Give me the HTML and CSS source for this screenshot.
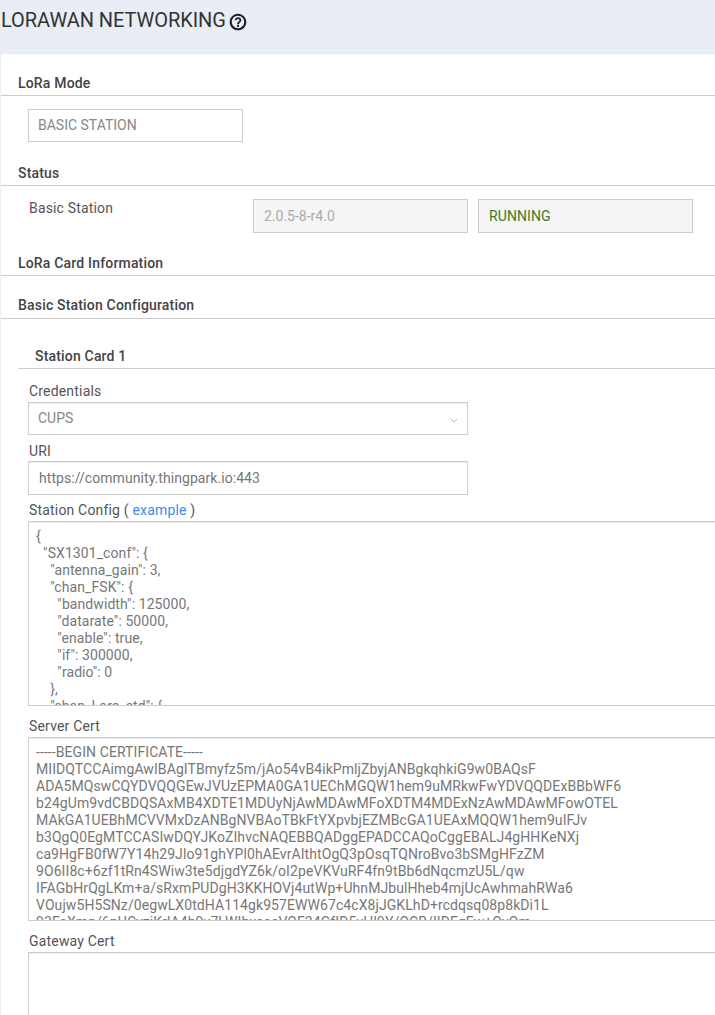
FILE: index.html
```html
<!DOCTYPE html>
<html lang="en">
<head>
<meta charset="utf-8">
<title>LoRaWAN Networking</title>
<link rel="stylesheet" href="styles.css">
</head>
<body>
<div class="page">
  <header class="page-header">
    <h1 class="page-title">LORAWAN NETWORKING</h1>
    <svg class="help-icon" viewBox="0 0 24 24" width="20" height="20" aria-hidden="true"><path d="M12 2C6.480 2 2 6.480 2 12s4.480 10 10 10 10-4.480 10-10S17.520 2 12 2zm0 17.400c-4.080 0-7.400-3.320-7.400-7.400S7.920 4.600 12 4.600s7.400 3.320 7.400 7.400-3.320 7.400-7.400 7.400z"/><path d="M10.900 15.700h2.300v2.200h-2.300zM12 6.200c-2.200 0-3.900 1.600-3.900 3.800h2.200c0-1 .7-1.700 1.700-1.700s1.700.7 1.700 1.600c0 1.800-2.800 1.700-2.800 4.900h2.300c0-2.200 2.800-2.500 2.800-4.900 0-2.200-1.800-3.700-4-3.700z"/></svg>
  </header>
  <main class="panel">
    <h2 class="section section-first">LoRa Mode</h2>
    <div class="mode-row"><div class="box mode-box">BASIC STATION</div></div>

    <h2 class="section section-status">Status</h2>
    <div class="status-row">
      <span class="status-label">Basic Station</span>
      <div class="box box-disabled status-box">2.0.5-8-r4.0</div>
      <div class="box box-disabled status-box status-running">RUNNING</div>
    </div>

    <h2 class="section section-info">LoRa Card Information</h2>
    <h2 class="section section-config">Basic Station Configuration</h2>

    <h3 class="card-title">Station Card 1</h3>
    <div class="card-body">
      <label class="field-label">Credentials</label>
      <div class="box select-box">CUPS
        <svg class="chevron" viewBox="0 0 10 6" width="8" height="5" aria-hidden="true"><path d="M1 1l4 4 4-4" fill="none" stroke="#a8a8a8" stroke-width="1"/></svg>
      </div>
      <label class="field-label label-uri">URI</label>
      <div class="box uri-box">https://community.thingpark.io:443</div>
      <label class="field-label label-config">Station Config ( <a class="link" href="#">example</a> )</label>
      <textarea class="area area-config" readonly>{
  "SX1301_conf": {
    "antenna_gain": 3,
    "chan_FSK": {
      "bandwidth": 125000,
      "datarate": 50000,
      "enable": true,
      "if": 300000,
      "radio": 0
    },
    "chan_Lora_std": {
      "bandwidth": 250000,
    }
  }
}</textarea>
      <label class="field-label label-cert">Server Cert</label>
      <textarea class="area area-cert" readonly>-----BEGIN CERTIFICATE-----
MIIDQTCCAimgAwIBAgITBmyfz5m/jAo54vB4ikPmljZbyjANBgkqhkiG9w0BAQsF
ADA5MQswCQYDVQQGEwJVUzEPMA0GA1UEChMGQW1hem9uMRkwFwYDVQQDExBBbWF6
b24gUm9vdCBDQSAxMB4XDTE1MDUyNjAwMDAwMFoXDTM4MDExNzAwMDAwMFowOTEL
MAkGA1UEBhMCVVMxDzANBgNVBAoTBkFtYXpvbjEZMBcGA1UEAxMQQW1hem9uIFJv
b3QgQ0EgMTCCASIwDQYJKoZIhvcNAQEBBQADggEPADCCAQoCggEBALJ4gHHKeNXj
ca9HgFB0fW7Y14h29Jlo91ghYPl0hAEvrAIthtOgQ3pOsqTQNroBvo3bSMgHFzZM
9O6II8c+6zf1tRn4SWiw3te5djgdYZ6k/oI2peVKVuRF4fn9tBb6dNqcmzU5L/qw
IFAGbHrQgLKm+a/sRxmPUDgH3KKHOVj4utWp+UhnMJbulHheb4mjUcAwhmahRWa6
VOujw5H5SNz/0egwLX0tdHA114gk957EWW67c4cX8jJGKLhD+rcdqsq08p8kDi1L
93FcXmn/6pUCyziKrlA4b9v7LWIbxcceVOF34GfID5yHI9Y/QCB/IIDEgEw+OyQm
jgSubJrIqg0CAwEAAaNCMEAwDwYDVR0TAQH/BAUwAwEB/zAOBgNVHQ8BAf8EBAMC
-----END CERTIFICATE-----</textarea>
      <label class="field-label label-gateway">Gateway Cert</label>
      <textarea class="area area-gateway" readonly></textarea>
    </div>
  </main>
</div>
</body>
</html>
```
FILE: styles.css
```css
* { box-sizing: border-box; }
html, body { margin: 0; padding: 0; }
body {
  background: #fff;
  font-family: Roboto, "Liberation Sans", sans-serif;
  font-size: 14px;
  color: #555;
}
.page {
  width: 715px;
  height: 1015px;
  overflow: hidden;
  background: #e9edf6;
}
.page-header {
  height: 54px;
  display: flex;
  align-items: flex-start;
  padding: 7px 0 0 1px;
  background: #e9edf6;
  border-bottom: 1px solid #e4e8f1;
}
.page-title {
  margin: 0;
  font-size: 20px;
  line-height: 26px;
  font-weight: 400;
  letter-spacing: -0.05px;
  color: #333;
}
.help-icon { margin: 5px 0 0 2px; fill: #222; flex: none; }
.panel {
  margin-left: 1px;
  background: #fff;
  height: 961px;
}
.section {
  margin: 0;
  padding-left: 17px;
  font-size: 14px;
  line-height: 20px;
  font-weight: 500;
  letter-spacing: 0.18px;
  color: #444;
  border-bottom: 1px solid #ccc;
}
.section-first { padding-top: 19px; padding-bottom: 2px; }
.mode-row { padding: 13px 0 0 27px; }
.box {
  display: flex;
  align-items: center;
  border: 1px solid #ccc;
  background: #fff;
  color: #888;
  font-size: 14px;
  padding-left: 9px;
}
.mode-box { width: 215px; height: 33px; padding-bottom: 1px; }
.section-status { margin-top: 21px; padding-bottom: 2px; }
.status-row { display: flex; padding: 13px 0 0 27px; height: 46px; }
.status-label { width: 225px; padding-left: 1px; line-height: 18px; letter-spacing: 0.16px; color: #555; }
.box-disabled { background: #f5f5f5; color: #aaa; padding-left: 10px; }
.status-box { width: 215px; height: 34px; margin-right: 10px; }
.status-running { color: #3c7a2e; letter-spacing: 0.1px; }
.section-info { margin-top: 21px; padding-bottom: 2px; }
.section-config { margin-top: 19px; padding-bottom: 3px; }
.card-title {
  margin: 27px 0 0 17px;
  padding-left: 17px;
  font-size: 14px;
  line-height: 20px;
  font-weight: 500;
  letter-spacing: 0.18px;
  color: #444;
  border-bottom: 1px solid #ccc;
  padding-bottom: 2px;
}
.card-body { padding-left: 27px; display: flex; flex-direction: column; align-items: flex-start; }
.field-label { display: block; padding-left: 1px; line-height: 20px; letter-spacing: 0.18px; color: #555; }
.card-body > .field-label:first-child { margin-top: 12px; }
.select-box { position: relative; width: 440px; height: 33px; margin-top: 1px; padding-bottom: 2px; box-shadow: inset 0 1px 1px rgba(0, 0, 0, 0.075); }
.chevron { position: absolute; right: 9px; top: 15px; }
.label-uri { margin-top: 6px; }
.uri-box { width: 440px; height: 34px; padding-left: 10px; margin-top: 0; letter-spacing: 0.06px; color: #777; box-shadow: inset 0 1px 1px rgba(0, 0, 0, 0.075); }
.label-config { margin-top: 5px; }
.link { color: #3a8ee6; text-decoration: none; }
.area {
  display: block;
  width: 760px;
  margin: 1px 0 0;
  padding: 6px 7px;
  border: 1px solid #ccc;
  border-radius: 0;
  font-family: inherit;
  font-size: 14px;
  line-height: 17px;
  letter-spacing: 0.08px;
  color: #777;
  background: #fff;
  box-shadow: inset 0 1px 1px rgba(0, 0, 0, 0.075);
  overflow: hidden;
  resize: none;
  outline: none;
  white-space: pre;
}
.area-config { height: 185px; }
.label-cert { margin-top: 10px; }
.area-cert { height: 184px; }
.label-gateway { margin-top: 10px; }
.area-gateway { height: 120px; }
```
